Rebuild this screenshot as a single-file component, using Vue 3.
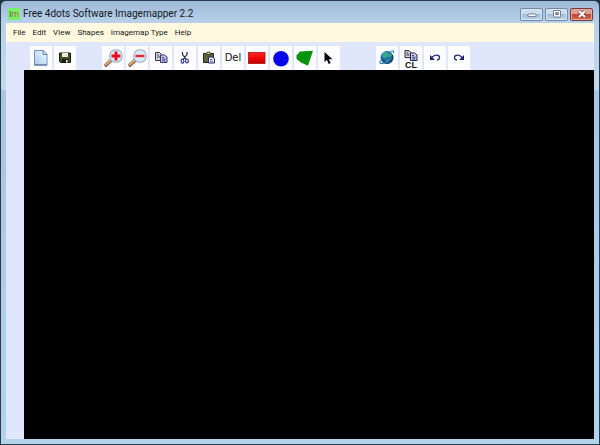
<script setup>
import { ref } from 'vue'

const menus = ref(['File', 'Edit', 'View', 'Shapes', 'Imagemap Type', 'Help'])

const groups = [
  ['New', 'Save'],
  ['Zoom in', 'Zoom out', 'Copy', 'Cut', 'Paste', 'Delete', 'Rectangle', 'Circle', 'Polygon', 'Select'],
  ['Preview', 'Copy to clipboard', 'Undo', 'Redo'],
]
</script>

<template>
  <div class="window">
    <header class="titlebar">
      <span class="app-icon" aria-hidden="true"><span class="app-icon-i">I</span>m</span>
      <h1 class="title">Free 4dots Software Imagemapper 2.2</h1>
      <div class="controls">
        <button class="control" type="button" aria-label="Minimize">
          <svg viewBox="0 0 10 8"><rect x="1" y="4" width="8" height="2.600" rx=".5" fill="#fff" stroke="#56687e" stroke-width=".8" /></svg>
        </button>
        <button class="control" type="button" aria-label="Maximize">
          <svg viewBox="0 0 10 8"><rect x="1.500" y=".5" width="7" height="6.500" rx=".5" fill="#fff" stroke="#56687e" stroke-width=".8" /><rect x="3.700" y="2.700" width="2.600" height="2" fill="#8fa9c6" stroke="#56687e" stroke-width=".8" /></svg>
        </button>
        <button class="control close" type="button" aria-label="Close">
          <svg viewBox="0 0 10 8"><path d="M2 1l6 6M8 1L2 7" stroke="#6b3436" stroke-width="3.200" /><path d="M2 1l6 6M8 1L2 7" stroke="#fff" stroke-width="2" /></svg>
        </button>
      </div>
    </header>

    <nav class="menubar" aria-label="Main menu">
      <button v-for="menu in menus" :key="menu" class="menu" type="button">{{ menu }}</button>
    </nav>

    <div class="toolbar" role="toolbar" aria-label="Tools">
      <div v-for="(group, index) in groups" :key="index" class="group">
        <button v-for="tool in group" :key="tool" class="tool" type="button" :aria-label="tool">
          <span v-if="tool === 'Delete'" class="del">Del</span>
          <template v-else-if="tool === 'Copy to clipboard'">
            <svg class="small-icon" viewBox="0 0 14 11">
              <path d="M1 .6h4l2 2v5H1z" fill="#ddd" stroke="#222" />
              <path d="M2.500 3h2M2.500 5h3" stroke="#222" />
              <path d="M6.500 3h4l2.500 2v5.500H6.500z" fill="#d2d2ee" stroke="#202057" />
              <path d="M8 5.500h2M8 7.200h3.500M8 8.900h3.500" stroke="#3b3b80" stroke-width="1" />
            </svg>
            <span class="cl">CL</span>
          </template>
          <svg v-else class="icon" viewBox="0 0 22 24">
            <defs>
              <linearGradient id="page" x1="1" y1="0" x2="0" y2="1">
                <stop offset="0" stop-color="#f5fbff" /><stop offset="1" stop-color="#a7caee" />
              </linearGradient>
              <linearGradient id="red" x1="0" y1="0" x2="0" y2="1">
                <stop offset="0" stop-color="#ff2929" /><stop offset=".45" stop-color="#f50909" /><stop offset="1" stop-color="#b90000" />
              </linearGradient>
              <radialGradient id="globe" cx=".35" cy=".3" r=".75">
                <stop offset="0" stop-color="#8fe7ee" /><stop offset=".35" stop-color="#2778b8" /><stop offset="1" stop-color="#06205f" />
              </radialGradient>
            </defs>
            <g v-if="tool === 'New'">
              <path d="M4.500 4.500h8.500l4 4v10.500H4.500z" fill="url(#page)" stroke="#7693bd" />
              <path d="M13 4.500v4h4z" fill="#e7f5ff" stroke="#49709d" stroke-width=".8" />
              <path d="M4.500 19h12.500" stroke="#486990" />
            </g>
            <g v-else-if="tool === 'Save'">
              <path d="M5.500 7h11v9.500h-10l-1-1z" fill="#484c22" stroke="#171b16" />
              <path d="M8 7h6v4H8z" fill="#e6e8dc" />
              <path d="M8 13h6.500v4H8z" fill="#171b16" />
              <path d="M12 14h1.600v2.500H12z" fill="#f5f5ef" />
            </g>
            <g v-else-if="tool === 'Zoom in' || tool === 'Zoom out'">
              <path d="M4 19l5.500-5" stroke="#7a5540" stroke-width="3.600" stroke-linecap="round" />
              <path d="M4 18.500l5-4.500" stroke="#dca978" stroke-width="2.200" stroke-linecap="round" />
              <circle cx="14" cy="10" r="6.400" fill="#dcebf8" stroke="#a9bbd0" stroke-width="1.300" />
              <path v-if="tool === 'Zoom in'" d="M9.500 10h9M14 5.500v9" stroke="#e80e20" stroke-width="3" />
              <path v-else d="M9.500 10h9" stroke="#ed2430" stroke-width="2.400" />
            </g>
            <g v-else-if="tool === 'Copy'">
              <path d="M5.500 6.500h4l2 2v6h-6z" fill="#d5d5de" stroke="#34344a" />
              <path d="M7 9h2M7 11h3" stroke="#45455a" stroke-width="1" />
              <path d="M10.500 9h4l2.500 2v5.500h-6.500z" fill="#c8c8e5" stroke="#34347a" />
              <path d="M12 11.500h2M12 13.200h3.500M12 14.900h3.500" stroke="#48488a" stroke-width="1" />
            </g>
            <g v-else-if="tool === 'Cut'" fill="none">
              <path d="M8.500 6v2.500l4 5M13 6v2.500l-4 5" stroke="#26263d" stroke-width="1.200" />
              <ellipse cx="8.500" cy="15.200" rx="1.400" ry="2" stroke="#30309b" stroke-width="1.200" />
              <ellipse cx="13" cy="15" rx="1.400" ry="2" stroke="#30309b" stroke-width="1.200" />
            </g>
            <g v-else-if="tool === 'Paste'">
              <path d="M5.500 7.500h10v9h-10z" fill="#5d653f" stroke="#222a20" />
              <path d="M8 8.500V7h1.500V6h2v1H13v1.500z" fill="#ded783" stroke="#292c1c" stroke-width=".8" />
              <path d="M10.500 11h4l2 2v4h-6z" fill="#edf0ff" stroke="#242463" />
              <path d="M12 13.500h2M12 15.200h3" stroke="#404080" stroke-width=".8" />
            </g>
            <rect v-else-if="tool === 'Rectangle'" x="2.500" y="6.500" width="16.500" height="11" fill="url(#red)" stroke="#b40c0c" stroke-width=".8" />
            <circle v-else-if="tool === 'Circle'" cx="11" cy="12.700" r="7.800" fill="#0606e9" />
            <path v-else-if="tool === 'Polygon'" d="M6 5.500L19 4.700l-5 15L7 16.500 2.500 13V9.500z" fill="#0a930f" />
            <path v-else-if="tool === 'Select'" d="M6.500 6v10l2.400-2.100 1.800 4 2-1-1.900-3.700h3.700z" fill="#080808" />
            <g v-else-if="tool === 'Preview'">
              <circle cx="11" cy="11.500" r="6.500" fill="url(#globe)" />
              <path d="M7 8l2.500-2 2 .5-1 2 1 1-2.500 2.500-2-1zM12 8l3-1 1 3-3 2zM10 14l3-1 1 2-3 2z" fill="#2fae72" />
              <path d="M14.500 5.500c2.500-1 3.500-.5 3 1.500M4.500 14.500c-1 2-.5 3.500 2 3 3-.5 7-3 9.500-6" fill="none" stroke="#2b7faa" stroke-width="1.200" />
            </g>
            <g v-else-if="tool === 'Undo'">
              <path d="M8 11.500c2.500-3.500 7.500-3 7.500 0 0 2-1.500 2.500-2.500 2.500" fill="none" stroke="#29297d" stroke-width="1.300" />
              <path d="M6 9v5h5z" fill="#202074" />
            </g>
            <g v-else-if="tool === 'Redo'">
              <path d="M14 11.500c-2.500-3.500-7.500-3-7.500 0 0 2 1.500 2.500 2.500 2.500" fill="none" stroke="#29297d" stroke-width="1.300" />
              <path d="M16 9v5h-5z" fill="#202074" />
            </g>
          </svg>
        </button>
      </div>
    </div>
    <main class="workspace"><div class="canvas"></div></main>
  </div>
</template>

<style>
body {
  background: #26333d;
}
</style>

<style scoped>
.window {
  box-sizing: border-box;
  min-height: 100vh;
  display: flex;
  flex-direction: column;
  padding: 0 5px 5px;
  border: 1px solid #263d49;
  border-radius: 6px 6px 0 0;
  background: linear-gradient(#9eb9d8, #b9d1ea 22px, #c2d8ee 88px, #a9c4e4 90px, #b3d3ed);
}
button {
  padding: 0;
  border: 0;
  font-family: "Liberation Sans", Arial, sans-serif;
  color: #161616;
}
.titlebar {
  height: 22px;
  display: flex;
  align-items: center;
  gap: 3px;
  padding-left: 2px;
}
.app-icon {
  width: 12px;
  height: 12px;
  margin-top: 4px;
  background: #79f26a;
  color: #a8604c;
  font: 9px/12px "Liberation Sans", Arial, sans-serif;
  text-align: center;
}
.app-icon-i {
  color: #3f5a4a;
}
.title {
  flex: 1;
  margin: 0;
  padding-top: 4px;
  font: 10px/16px Roboto, sans-serif;
  color: #101820;
}
.controls {
  display: flex;
  gap: 2px;
  padding-right: 1px;
}
.control {
  display: grid;
  place-items: center;
  box-sizing: border-box;
  width: 23px;
  height: 13px;
  margin-top: 4px;
  border: 1px solid #7288a2;
  border-radius: 2px;
  background: linear-gradient(#cadced 45%, #a4bdd8 50%, #bdd4eb);
  box-shadow: inset 0 0 0 1px #dbe8f5;
}
.control svg {
  width: 10px;
  height: 8px;
}
.control.close {
  border-color: #773b3b;
  background: linear-gradient(#dca092 45%, #c3452f 50%, #d56e52);
  box-shadow: inset 0 0 0 1px #e3aaa0;
}
.menubar {
  height: 19px;
  display: flex;
  align-items: center;
  gap: 7px;
  padding-left: 7px;
  background: #fff9df;
}
.menu {
  background: none;
  font-family: Roboto, sans-serif;
  font-size: 8px;
  line-height: 12px;
}
.toolbar {
  height: 28px;
  box-sizing: border-box;
  display: flex;
  align-items: flex-end;
  padding-left: 24px;
  background: #e1e7fa;
}
.group {
  display: flex;
  gap: 2px;
}
.group:nth-child(2) {
  margin-left: 26px;
}
.group:nth-child(3) {
  margin-left: 36px;
}
.tool {
  display: flex;
  flex-direction: column;
  align-items: center;
  justify-content: center;
  width: 22px;
  height: 24px;
  background: #fdfdff;
}
.icon {
  width: 22px;
  height: 24px;
}
.small-icon {
  flex: none;
  width: 14px;
  height: 11px;
  margin-top: 3px;
}
.del {
  font: 10px/12px "DejaVu Sans", sans-serif;
}
.cl {
  font-size: 9px;
  font-weight: bold;
  line-height: 9px;
}
.workspace {
  flex: 1;
  display: flex;
  padding-left: 18px;
  background: #e1e7fa;
}
.canvas {
  flex: 1;
  background: #000;
}
</style>
